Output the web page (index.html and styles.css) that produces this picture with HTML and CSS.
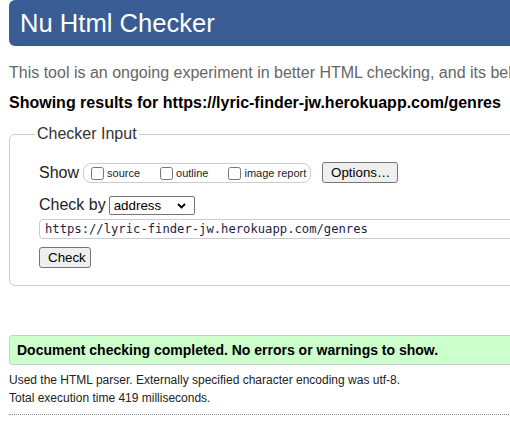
FILE: index.html
```html
<!DOCTYPE html>
<html lang="en">
<head>
<meta charset="utf-8">
<title>Nu Html Checker</title>
<link rel="stylesheet" href="styles.css">
</head>
<body>
<div class="page">
  <h1 class="title">Nu Html Checker</h1>
  <p class="intro">This tool is an ongoing experiment in better HTML checking, and its behavior remains subject to change</p>
  <p class="results">Showing results for https://lyric-finder-jw.herokuapp.com/genres</p>

  <fieldset class="checker">
    <legend class="legend">Checker Input</legend>
    <div class="row row-show">
      <span class="label">Show</span>
      <span class="show-box">
        <label class="opt"><input type="checkbox" class="cb"><span>source</span></label>
        <label class="opt"><input type="checkbox" class="cb"><span>outline</span></label>
        <label class="opt last"><input type="checkbox" class="cb"><span>image report</span></label>
      </span>
      <button class="btn btn-options" type="button">Options…</button>
    </div>
    <div class="row row-by">
      <span class="label">Check by</span>
      <span class="select-wrap">
        <select class="select"><option>address</option></select>
        <svg class="chev" width="9" height="6" viewBox="0 0 9 6"><path d="M1 1 L4.5 4.5 L8 1" fill="none" stroke="#000" stroke-width="1.8"/></svg>
      </span>
    </div>
    <div class="row row-url">
      <input class="url" type="text" value="https://lyric-finder-jw.herokuapp.com/genres">
    </div>
    <div class="row row-check">
      <button class="btn btn-check" type="button">Check</button>
    </div>
  </fieldset>

  <p class="success">Document checking completed. No errors or warnings to show.</p>
  <p class="meta">Used the HTML parser. Externally specified character encoding was utf-8.</p>
  <p class="meta">Total execution time 419 milliseconds.</p>
  <hr class="dots">
</div>
</body>
</html>
```
FILE: styles.css
```css
html, body {
  overflow: hidden;
}
body {
  margin: 0;
  font-family: "Liberation Sans", Arial, sans-serif;
  color: #000;
  background: #fff;
}
.page {
  width: 700px;
  padding-left: 9px;
}
.title {
  margin: 0;
  height: 46px;
  line-height: 46px;
  padding-left: 11px;
  background: #3a5c95;
  color: #fff;
  font-size: 25.6px;
  font-weight: normal;
  border-radius: 6px;
}
.intro {
  margin: 18px 0 0;
  font-size: 16px;
  line-height: 18px;
  color: #666;
  white-space: nowrap;
}
.results {
  margin: 12px 0 0;
  font-size: 16px;
  line-height: 18px;
  font-weight: bold;
  white-space: nowrap;
}
.checker {
  margin: 13px 0 0;
  padding: 0 0 17px 29px;
  border: 1px solid #ccc;
  border-radius: 6px;
  min-inline-size: 0;
}
.legend {
  margin-left: -4px;
  padding: 0 2px;
  font-size: 16px;
  line-height: 18px;
  color: #333;
}
.row {
  display: flex;
  align-items: center;
}
.row-show {
  margin-top: 19px;
  height: 21px;
}
.label {
  font-size: 16px;
  line-height: 18px;
  color: #222;
  white-space: nowrap;
}
.show-box {
  display: inline-flex;
  align-items: center;
  flex-shrink: 0;
  box-sizing: border-box;
  min-width: 228px;
  margin-left: 4px;
  height: 20px;
  padding: 0 3px 0 7px;
  border: 1px solid #ccc;
  border-radius: 8px;
  white-space: nowrap;
}
.opt {
  display: inline-flex;
  align-items: center;
  flex-shrink: 0;
  margin-right: 20px;
  font-size: 11px;
  color: #222;
  white-space: nowrap;
}
.opt.last {
  margin-right: 0;
}
.cb {
  margin: 2px 3px 0 0;
  width: 13px;
  height: 13px;
  flex-shrink: 0;
}
.btn {
  font-family: "Liberation Sans", Arial, sans-serif;
  font-size: 13.33px;
  background: #efefef;
  border: 1px solid #767676;
  border-radius: 3px;
  color: #000;
  height: 21px;
  padding: 0 8px;
  white-space: nowrap;
  flex-shrink: 0;
}
.btn-options {
  margin-left: 11px;
  width: 76px;
}
.row-by {
  margin-top: 12px;
  height: 20px;
}
.select-wrap {
  position: relative;
  margin-left: 3px;
  display: inline-block;
}
.select {
  -webkit-appearance: none;
  appearance: none;
  display: block;
  width: 86px;
  height: 19px;
  padding: 0 0 0 4px;
  font-family: "Liberation Sans", Arial, sans-serif;
  font-size: 13.33px;
  border: 1px solid #767676;
  border-radius: 2px;
  background: #fff;
  color: #000;
}
.chev {
  position: absolute;
  right: 9px;
  top: 7px;
}
.row-url {
  margin-top: 4px;
}
.url {
  width: 640px;
  height: 20px;
  box-sizing: border-box;
  padding: 0 5px;
  font-family: "DejaVu Sans Mono", "Liberation Mono", monospace;
  font-size: 12.2px;
  color: #1e1e46;
  border: 1px solid #ccc;
  border-radius: 4px;
  background: #fff;
}
.row-check {
  margin-top: 8px;
}
.btn-check {
  width: 52px;
}
.success {
  margin: 49px 0 0;
  height: 28px;
  line-height: 28px;
  padding-left: 7px;
  background: #ccffcc;
  border: 1px solid #ccc;
  border-radius: 3px;
  font-size: 14px;
  font-weight: bold;
  white-space: nowrap;
}
.meta {
  margin: 0;
  font-size: 12px;
  line-height: 18px;
  color: #222;
  white-space: nowrap;
}
.success + .meta {
  margin-top: 6px;
}
.dots {
  margin: 7px 0 0;
  border: 0;
  border-top: 1px dotted #888;
  height: 0;
}
```
